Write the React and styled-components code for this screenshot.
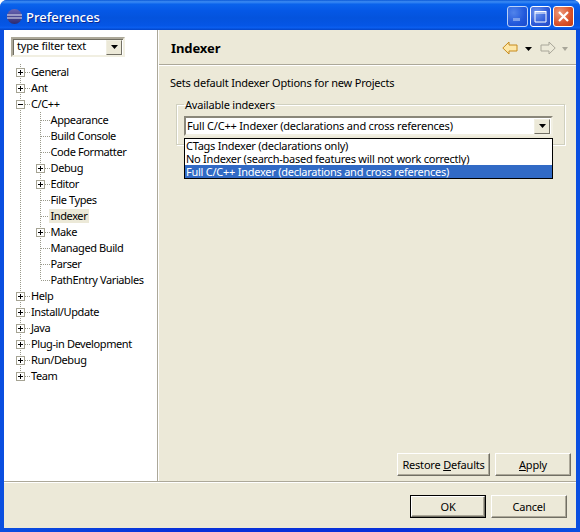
import React from "react";
import styled, { createGlobalStyle } from "styled-components";

const Global = createGlobalStyle`
  html, body { margin: 0; padding: 0; background: #fff; }
  * { box-sizing: border-box; }
  body { font-family: "Noto Sans", "DejaVu Sans", sans-serif; font-size: 11px; color: #000; }
`;
const FONT_SPACING = "-0.2px";

const Win = styled.div`
  width: 580px; height: 532px; display: flex; flex-direction: column;
  background: linear-gradient(90deg, #0a4fe0, #0831d9 30%, #0831d9 70%, #0a4fe0); border-radius: 7px 7px 0 0; overflow: hidden;
`;
const TitleBar = styled.div`
  height: 30px; flex: none; display: flex; align-items: center; padding: 3px 6px 0 7px;
  background: linear-gradient(180deg, #0a58d6 0%, #3c8cf4 6%, #0a63ec 14%, #0558e6 35%, #0453dd 60%, #0556e6 85%, #0a5eef 92%, #0345c8 100%);
`;
const TitleText = styled.span`
  margin-left: 4px; color: #fff; font-size: 13px; font-weight: 500; text-shadow: 1px 1px 0 #0a2a94; flex: 1;
`;
const WinBtn = styled.div`
  width: 21px; height: 21px; margin-left: 2px; border: 1px solid #fff; border-radius: 3px;
  display: flex; align-items: center; justify-content: center;
  background: ${p => p.$kind === "close"
    ? "radial-gradient(circle at 30% 30%, #ee9a7c, #d9512a 60%, #c23a12)"
    : "radial-gradient(circle at 30% 30%, #6f96ee, #2e5ad8 60%, #2448c4)"};
  opacity: ${p => p.$dim ? 0.72 : 1};
`;
const Client = styled.div`
  flex: 1; margin: 0 4px 4px; background: #ece9d8; display: flex; flex-direction: column; min-height: 0;
`;
const Main = styled.div`
  height: 452px; flex: none; display: flex; border-bottom: 1px solid #aca899;
`;
const Nav = styled.div`
  width: 154px; flex: none; background: #fff; border-right: 1px solid #aca899; padding: 7px 0 0 7px;
`;
const FilterCombo = styled.div`
  width: 114px; height: 20px; display: flex; align-items: center; background: #fff;
  border: 2px solid; border-color: #aca899 #f1efe2 #f1efe2 #aca899;
  box-shadow: inset 1px 1px 0 #716f64;
  padding: 0 1px 0 4px; font-size: 11px;
`;
const ComboLabel = styled.span`
  flex: 1; white-space: nowrap; letter-spacing: ${FONT_SPACING}; line-height: 14px; padding-bottom: ${p => p.$raised ? "2px" : "0"};
`;
const ArrowBtn = styled.div`
  width: 16px; height: 15px; flex: none; display: flex; align-items: center; justify-content: center;
  background: #ece9d8; border: 1px solid; border-color: #f1efe2 #716f64 #716f64 #f1efe2;
`;
const Tree = styled.div`
  margin: 7px 0 0 -7px; display: flex; flex-direction: column;
`;
const Row = styled.div`
  height: 16px; display: flex; align-items: center; white-space: nowrap; letter-spacing: -0.4px;
`;
const Gutter = styled.svg`
  flex: none; display: block;
`;
const Label = styled.span`
  margin-left: ${p => p.$selected ? "-2px" : "0"};
  padding: ${p => p.$selected ? "0 2px" : "0"};
  height: 14px; line-height: 14px;
  background: ${p => p.$selected ? "#ece9d8" : "transparent"};
`;
const Content = styled.div`
  flex: 1; min-width: 0; display: flex; flex-direction: column; border-left: 1px solid #fff;
`;
const Header = styled.div`
  height: 35px; flex: none; display: flex; align-items: center; padding: 1px 5px 0 12px;
  border-bottom: 1px solid #aca899; box-shadow: 0 1px 0 #fff;
`;
const HeaderTitle = styled.h1`
  margin: 0; flex: 1; font-size: 13px; font-weight: 700; letter-spacing: -0.1px;
`;
const NavArrows = styled.div`
  display: flex; align-items: center; width: 69px;
`;
const Body = styled.div`
  flex: 1; display: flex; flex-direction: column; padding: 11px 5px 5px 11px; min-height: 0;
`;
const Desc = styled.div`
  line-height: 14px; letter-spacing: ${FONT_SPACING}; height: 14px;
`;
const Group = styled.fieldset`
  position: relative; margin: 8px 6px 0 6px; padding: 0 11px 0 7px; height: 47px;
  border: 1px solid #d0d0bf; box-shadow: 1px 1px 0 #fff, inset 1px 1px 0 #fff;
  min-inline-size: 0;
`;
const Legend = styled.legend`
  padding: 0 1px; line-height: 13px; font-size: 11px; letter-spacing: ${FONT_SPACING};
`;
const IndexerCombo = styled.div`
  height: 20px; margin-top: 5px; display: flex; align-items: center; background: #fff;
  border: 2px solid; border-color: #8a877a #f1efe2 #f1efe2 #8a877a; padding: 0 1px;
`;
const Popup = styled.div`
  position: absolute; left: 7px; top: 27px; width: 369px; background: #fff; border: 1px solid #000;
  display: flex; flex-direction: column;
`;
const Option = styled.div`
  height: 13px; line-height: 13px; padding-left: 1px; white-space: nowrap; letter-spacing: -0.25px;
  background: ${p => p.$active ? "#316ac5" : "transparent"};
  color: ${p => p.$active ? "#fff" : "#000"};
`;
const Actions = styled.div`
  margin-top: auto; display: flex; justify-content: flex-end; gap: 5px;
`;
const Button = styled.button`
  width: ${p => p.$w}px; height: ${p => p.$h || 23}px; padding: 0; font: inherit; font-size: 11px; color: #000;
  background: #ece9d8; letter-spacing: ${FONT_SPACING};
  border: 1px solid; border-color: #fff #716f64 #716f64 #fff;
  box-shadow: inset -1px -1px 0 #aca899, ${p => p.$def ? "0 0 0 1px #000" : "0 0 0 0 transparent"};
  u { text-underline-offset: 1px; }
`;
const DefaultWrap = styled.div`
  padding: 1px; display: flex;
`;
const Footer = styled.div`
  flex: 1; display: flex; justify-content: flex-end; align-items: flex-start; gap: 5px;
  padding: 12px 9px 0 0; border-top: 1px solid #fff;
`;

const Plus = ({ x, open }) => (
  <>
    <rect x={x + 0.5 - 4} y="4.5" width="8" height="8" fill="#fff" stroke="#a5a393" />
    <path d={`M${x - 2} 8.5h5`} stroke="#000" />
    {!open && <path d={`M${x + .5} 6v5`} stroke="#000" />}
  </>
);

const Dots = ({ d }) => <path d={d} stroke="#9a9a8c" strokeDasharray="1 1" fill="none" />;

const GW = [27, 46.5];
const TreeRow = ({ level, text, expander, open, last, lastTop, selected }) => {
  const w = GW[level];
  return (
    <Row>
      <Gutter width={w} height="16" viewBox={`0 0 ${w} 16`}>
        {level === 0 ? (
          <>
            <Dots d={lastTop ? "M16.5 0V8" : "M16.5 0V16"} />
            <Dots d="M21 8.5H27" />
            {expander && <Plus x={16} open={open} />}
          </>
        ) : (
          <>
            <Dots d="M16.5 0V16" />
            <Dots d={last ? "M36.5 0V8" : "M36.5 0V16"} />
            <Dots d={expander ? "M41 8.5H46" : "M37 8.5H46"} />
            {expander && <Plus x={36} open={false} />}
          </>
        )}
      </Gutter>
      <Label $selected={selected}>{text}</Label>
    </Row>
  );
};

const items = [
  [0, "General", 1], [0, "Ant", 1], [0, "C/C++", 1, 1],
  [1, "Appearance"], [1, "Build Console"], [1, "Code Formatter"], [1, "Debug", 1], [1, "Editor", 1],
  [1, "File Types"], [1, "Indexer", 0, 0, 0, 1], [1, "Make", 1], [1, "Managed Build"], [1, "Parser"],
  [1, "PathEntry Variables", 0, 0, 1],
  [0, "Help", 1], [0, "Install/Update", 1], [0, "Java", 1], [0, "Plug-in Development", 1], [0, "Run/Debug", 1], [0, "Team", 1, 0, 0, 0, 1],
];

const Caret = ({ color = "#000" }) => (
  <svg width="7" height="4" viewBox="0 0 7 4"><path d="M0 0h7L3.5 4z" fill={color} /></svg>
);

export default function App() {
  return (
    <Win>
      <Global />
      <TitleBar>
        <svg width="15" height="15" viewBox="0 0 15 15">
          <defs>
            <linearGradient id="ec" x1="0" y1="0" x2="0" y2="1">
              <stop offset="0" stopColor="#6a66b4" /><stop offset="1" stopColor="#2c2a70" />
            </linearGradient>
          </defs>
          <circle cx="7.5" cy="7.5" r="7.5" fill="url(#ec)" />
          <path d="M0 6h15M0 9h15" stroke="#e8e8f4" strokeWidth="1.2" />
        </svg>
        <TitleText>Preferences</TitleText>
        <WinBtn $dim>
          <svg width="11" height="11" viewBox="0 0 11 11"><rect x="1" y="7" width="7" height="3" fill="#a9bdf0" /></svg>
        </WinBtn>
        <WinBtn>
          <svg width="13" height="13" viewBox="0 0 13 13"><path d="M1 1.5h11M1 3h11M1 1v11h11V1" fill="none" stroke="#fff" /></svg>
        </WinBtn>
        <WinBtn $kind="close">
          <svg width="13" height="13" viewBox="0 0 13 13"><path d="M2 2l9 9M11 2l-9 9" stroke="#fff" strokeWidth="2.2" /></svg>
        </WinBtn>
      </TitleBar>
      <Client>
        <Main>
          <Nav>
            <FilterCombo>
              <ComboLabel $raised>type filter text</ComboLabel>
              <ArrowBtn><Caret /></ArrowBtn>
            </FilterCombo>
            <Tree>
              {items.map(([level, text, expander, open, last, selected, lastTop]) => (
                <TreeRow key={text} level={level} text={text} expander={!!expander} open={!!open} last={!!last}
                  selected={!!selected} lastTop={!!lastTop} />
              ))}
            </Tree>
          </Nav>
          <Content>
            <Header>
              <HeaderTitle>Indexer</HeaderTitle>
              <NavArrows>
                <svg width="16" height="14" viewBox="0 0 16 14">
                  <path d="M.8 7L7 1v3h8v6H7v3z" fill="#fde7a8" stroke="#c68a1c" />
                </svg>
                <svg width="22" height="14" viewBox="0 0 22 14"><path d="M7 6h7l-3.5 4z" fill="#000" /></svg>
                <svg width="16" height="14" viewBox="0 0 16 14">
                  <path d="M15.2 7L9 1v3H1v6h8v3z" fill="#ece9d8" stroke="#a8a699" />
                </svg>
                <svg width="15" height="14" viewBox="0 0 15 14"><path d="M6 6h6l-3 4z" fill="#a8a699" /></svg>
              </NavArrows>
            </Header>
            <Body>
              <Desc>Sets default Indexer Options for new Projects</Desc>
              <Group>
                <Legend>Available indexers</Legend>
                <IndexerCombo>
                  <ComboLabel>Full C/C++ Indexer (declarations and cross references)</ComboLabel>
                  <ArrowBtn><Caret /></ArrowBtn>
                </IndexerCombo>
                <Popup>
                  <Option>CTags Indexer (declarations only)</Option>
                  <Option>No Indexer (search-based features will not work correctly)</Option>
                  <Option $active>Full C/C++ Indexer (declarations and cross references)</Option>
                </Popup>
              </Group>
              <Actions>
                <Button $w={93}>Restore <u>D</u>efaults</Button>
                <Button $w={76}><u>A</u>pply</Button>
              </Actions>
            </Body>
          </Content>
        </Main>
        <Footer>
          <DefaultWrap><Button $w={74} $h={21} $def>OK</Button></DefaultWrap>
          <Button $w={76}>Cancel</Button>
        </Footer>
      </Client>
    </Win>
  );
}
